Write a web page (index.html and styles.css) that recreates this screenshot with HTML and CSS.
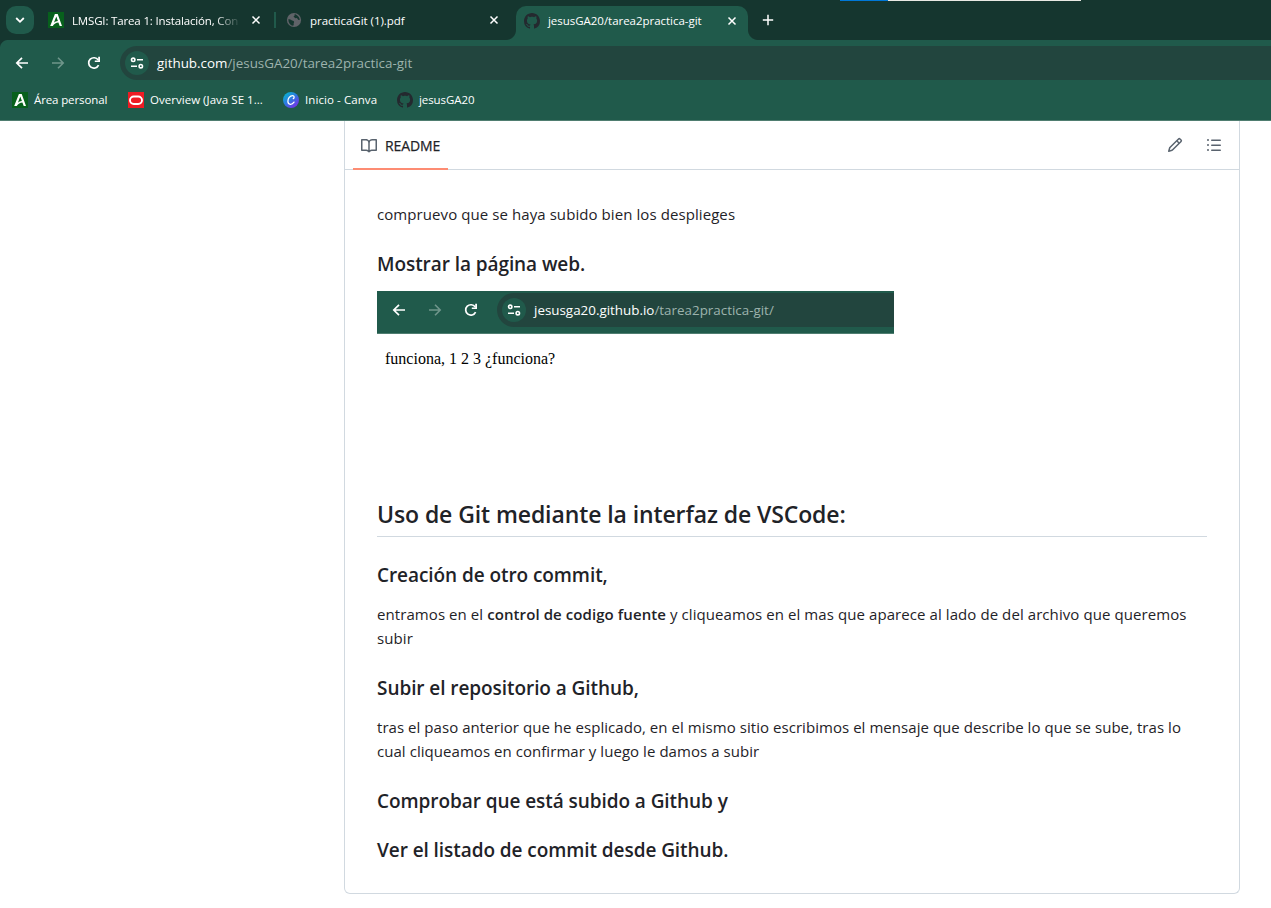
FILE: index.html
```html
<!DOCTYPE html>
<html lang="es">
<head>
<meta charset="utf-8">
<title>jesusGA20/tarea2practica-git</title>
<link rel="stylesheet" href="styles.css">
</head>
<body>
<svg class="defs" aria-hidden="true">
  <symbol id="back" viewBox="0 0 16 16"><path d="M14 8H3M8 2.8 2.8 8 8 13.2" fill="none" stroke="currentColor" stroke-width="1.7"/></symbol>
  <symbol id="forward" viewBox="0 0 16 16"><path d="M2 8h11M8 2.8 13.2 8 8 13.2" fill="none" stroke="currentColor" stroke-width="1.6"/></symbol>
  <symbol id="reload" viewBox="0 0 16 16"><path d="M12.600 10.200A5.200 5.200 0 1 1 12.200 5" fill="none" stroke="currentColor" stroke-width="1.700"/><path d="M14 1.800V7H8.800V5.400h3.400V1.800z" fill="currentColor"/></symbol>
  <symbol id="tune" viewBox="0 0 16 16"><g fill="none" stroke="currentColor" stroke-width="1.6"><circle cx="4.2" cy="4.8" r="1.7"/><path d="M8 4.800h6M2 11.200h6"/><circle cx="11.8" cy="11.2" r="1.7"/></g></symbol>
  <symbol id="close" viewBox="0 0 10 10"><path d="m1.5 1.5 7 7m0-7-7 7" stroke="currentColor" stroke-width="1.5"/></symbol>
  <symbol id="junta" viewBox="0 0 16 16"><path fill="#07601c" d="M0 0h16v16H0z"/><path fill="#fff" d="M6.900 2h2.800L14 14h-2.300l-1.300-3.500c-2.400.1-4.200 1.300-5.600 3.500H2.200zM8.300 4.400 5.900 10.700c1.100-1 2.500-1.600 4-1.700z"/></symbol>
  <symbol id="github" viewBox="0 0 16 16"><path fill="#24292f" d="M8 0c4.420 0 8 3.580 8 8a8.013 8.013 0 0 1-5.450 7.590c-.4.080-.55-.17-.55-.38 0-.27.010-1.130.010-2.200 0-.75-.25-1.230-.54-1.480 1.780-.2 3.650-.88 3.650-3.950 0-.88-.31-1.590-.82-2.150.08-.2.360-1.020-.08-2.120 0 0-.67-.22-2.200.82-.64-.18-1.320-.27-2-.27-.68 0-1.360.09-2 .27-1.530-1.030-2.200-.82-2.200-.82-.44 1.100-.16 1.920-.08 2.120-.51.560-.82 1.280-.82 2.150 0 3.060 1.860 3.750 3.640 3.950-.23.200-.44.550-.51 1.070-.46.210-1.610.550-2.330-.66-.15-.24-.6-.83-1.230-.82-.67.010-.27.380.010.530.340.190.730.900.820 1.130.160.450.680 1.310 2.690.940 0 .67.010 1.300.010 1.490 0 .21-.15.450-.55.380A7.995 7.995 0 0 1 0 8c0-4.420 3.580-8 8-8Z"/></symbol>
</svg>

<header class="browser">
  <div class="tabstrip">
    <span class="tab-search"><svg viewBox="0 0 10 10"><path d="m1.200 3 3.800 3.800L8.800 3" fill="none" stroke="#fff" stroke-width="1.800"/></svg></span>
    <div class="tab tab-one">
      <svg class="favicon"><use href="#junta"/></svg>
      <span class="tab-title fade">LMSGI: Tarea 1: Instalación, Con</span>
      <svg class="close"><use href="#close"/></svg>
    </div>
    <div class="tab tab-two">
      <svg class="favicon" viewBox="0 0 16 16"><circle cx="8" cy="8" r="7.100" fill="#5f6368"/><path d="M8.500 2.200C10 2 13.800 4.600 13.700 8c-.8.300-1.800-.2-2.200-1.200-.4-.9-1.600-.4-2.500-.8-1-.5-.7-1.200-1.500-1.400.3-.9 1.900-.9 1-2.400zM2.300 7.200c1.600 0 2.500.2 3.300 1 .7.700 1.900.3 2.400 1.200.5 1-.6 1.500-.3 2.600.2.700-.2 1.300-.7 1.800-2.600-.5-4.700-2.700-4.700-6.600z" fill="#15362f"/></svg>
      <span class="tab-title">practicaGit (1).pdf</span>
      <svg class="close"><use href="#close"/></svg>
    </div>
    <div class="tab tab-active">
      <svg class="favicon"><use href="#github"/></svg>
      <span class="tab-title">jesusGA20/tarea2practica-git</span>
      <svg class="close"><use href="#close"/></svg>
    </div>
    <svg class="new-tab" viewBox="0 0 12 12"><path d="M6 .8v10.400M.8 6h10.400" stroke="#fff" stroke-width="1.500"/></svg>
    <div class="edge"></div>
  </div>
  <div class="toolbar">
    <div class="nav">
      <svg><use href="#back"/></svg><svg class="dim"><use href="#forward"/></svg><svg><use href="#reload"/></svg>
    </div>
    <div class="address"><span class="site"><svg><use href="#tune"/></svg></span><span class="url">github.com<i>/jesusGA20/tarea2practica-git</i></span></div>
  </div>
  <nav class="bookmarks">
    <a class="b1"><svg><use href="#junta"/></svg><span>Área personal</span></a>
    <a class="b2"><svg viewBox="0 0 16 16"><path fill="#ed1c24" d="M0 0h16v16H0z"/><rect x="2" y="4.500" width="12" height="7.500" rx="3.750" fill="none" stroke="#fff" stroke-width="1.900"/></svg><span>Overview (Java SE 1...</span></a>
    <a class="b3"><svg viewBox="0 0 16 16"><defs><linearGradient id="canva" x1="0" y1="0" x2=".8" y2="1"><stop offset="0" stop-color="#00c4cc"/><stop offset=".5" stop-color="#2b7be0"/><stop offset="1" stop-color="#7d2ae8"/></linearGradient></defs><circle cx="8" cy="8" r="8" fill="url(#canva)"/><path d="M10.300 6.600c1.200-.8 1.200-3-.7-3C7 3.600 4.700 6.500 4.900 9.500c.2 3.500 4 3.700 6.100.6" fill="none" stroke="#fff" stroke-width="1.300" stroke-linecap="round"/></svg><span>Inicio - Canva</span></a>
    <a class="b4"><svg><use href="#github"/></svg><span>jesusGA20</span></a>
  </nav>
</header>

<main class="readme">
  <div class="readme-head">
    <div class="readme-tab">
      <svg viewBox="0 0 16 16"><path d="M0 1.750A.75.750 0 0 1 .750 1h4.253c1.227 0 2.317.590 3 1.501A3.743 3.743 0 0 1 11.006 1h4.245a.75.750 0 0 1 .750.750v10.500a.75.750 0 0 1-.750.750h-4.507a2.250 2.250 0 0 0-1.591.659l-.622.621a.75.750 0 0 1-1.060 0l-.622-.621A2.250 2.250 0 0 0 5.258 13H.750a.75.750 0 0 1-.750-.750Zm7.251 10.324.004-5.073-.002-2.253A2.250 2.250 0 0 0 5.003 2.500H1.500v9h3.757a3.750 3.750 0 0 1 1.994.574ZM8.755 4.750l-.004 7.322a3.752 3.752 0 0 1 1.992-.572H14.500v-9h-3.495a2.250 2.250 0 0 0-2.250 2.250Z"/></svg>
      <span>README</span>
    </div>
    <div class="actions">
      <svg viewBox="0 0 16 16"><path d="M11.013 1.427a1.750 1.750 0 0 1 2.474 0l1.086 1.086a1.750 1.750 0 0 1 0 2.474l-8.610 8.610c-.210.210-.470.364-.756.445l-3.251.930a.75.750 0 0 1-.927-.928l.929-3.250c.081-.286.235-.547.445-.758l8.610-8.610Zm.176 4.823L9.750 4.810l-6.286 6.287a.253.253 0 0 0-.064.108l-.558 1.953 1.953-.558a.253.253 0 0 0 .108-.064Zm1.238-3.763a.25.250 0 0 0-.354 0L10.811 3.750l1.439 1.440 1.263-1.263a.25.250 0 0 0 0-.354Z"/></svg>
      <svg viewBox="0 0 16 16"><path d="M5.750 2.500h8.500a.75.750 0 0 1 0 1.500h-8.500a.75.750 0 0 1 0-1.500Zm0 5h8.500a.75.750 0 0 1 0 1.500h-8.500a.75.750 0 0 1 0-1.500Zm0 5h8.500a.75.750 0 0 1 0 1.500h-8.500a.75.750 0 0 1 0-1.500ZM2 14a1 1 0 1 1 0-2 1 1 0 0 1 0 2Zm1-6a1 1 0 1 1-2 0 1 1 0 0 1 2 0ZM2 4a1 1 0 1 1 0-2 1 1 0 0 1 0 2Z"/></svg>
    </div>
  </div>
  <article class="markdown">
    <p>compruevo que se haya subido bien los desplieges</p>
    <h3>Mostrar la página web.</h3>
    <div class="capture">
      <div class="capture-bar">
        <div class="nav"><svg><use href="#back"/></svg><svg class="dim"><use href="#forward"/></svg><svg><use href="#reload"/></svg></div>
        <div class="address"><span class="site"><svg><use href="#tune"/></svg></span><span class="url">jesusga20.github.io<i>/tarea2practica-git/</i></span></div>
      </div>
      <div class="capture-page">funciona, 1 2 3 ¿funciona?</div>
    </div>
    <h2>Uso de Git mediante la interfaz de VSCode:</h2>
    <h3>Creación de otro commit,</h3>
    <p>entramos en el <b>control de codigo fuente</b> y cliqueamos en el mas que aparece al lado de del archivo que queremos<br>subir</p>
    <h3>Subir el repositorio a Github,</h3>
    <p class="tight">tras el paso anterior que he esplicado, en el mismo sitio escribimos el mensaje que describe lo que se sube, tras lo<br>cual cliqueamos en confirmar y luego le damos a subir</p>
    <h3>Comprobar que está subido a Github y</h3>
    <h3>Ver el listado de commit desde Github.</h3>
  </article>
</main>
</body>
</html>
```
FILE: styles.css
```css
* { box-sizing: border-box; }
body { margin: 0; height: 908px; overflow: hidden; background: #fff; color: #1f2328; font-family: "Open Sans", "Noto Sans", sans-serif; }
svg { display: block; flex: none; }
.defs { display: none; }
i { font-style: normal; }

.browser { height: 121px; background: #205a4b; color: #fff; border-bottom: 1px solid #4f7d70; }
.tabstrip { position: relative; display: flex; align-items: center; height: 40px; padding-left: 6px; background: #15362f; }
.tab-search { display: grid; place-items: center; width: 28px; height: 28px; border-radius: 10px; background: #205a4b; }
.tab-search svg { width: 10px; height: 10px; }
.tab { display: flex; align-items: center; height: 40px; font-size: 11.5px; white-space: nowrap; }
.tab .favicon { width: 16px; height: 16px; margin-right: 8px; }
.tab .close { width: 10px; height: 10px; margin-left: auto; }
.tab-title { line-height: 16px; padding-top: 1px; letter-spacing: -.03px; }
.tab-one { width: 242px; padding-left: 14px; padding-right: 15px; position: relative; }
.tab-one::after { content: ""; position: absolute; right: 0; top: 12px; width: 2px; height: 16px; background: #205a4b; }
.tab-two { width: 240px; padding-left: 10px; padding-right: 17px; }
.tab-active { position: relative; align-self: flex-end; width: 232px; height: 34px; padding: 0 11px 5px 8px; border-radius: 10px 10px 0 0; background: #205a4b; }
.tab-active::before, .tab-active::after { content: ""; position: absolute; bottom: 0; width: 10px; height: 10px; }
.tab-active::before { left: -10px; background: radial-gradient(circle at 0 0, #15362f 9.500px, #205a4b 10.500px); }
.tab-active::after { right: -10px; background: radial-gradient(circle at 100% 0, #15362f 9.500px, #205a4b 10.500px); }
.fade { width: 169px; letter-spacing: -.16px; -webkit-mask-image: linear-gradient(90deg, #000 143px, transparent 169px); }
.new-tab { width: 12px; height: 12px; margin-left: 14px; }
.edge { position: absolute; left: 840px; top: 0; width: 241px; height: 1px; background: linear-gradient(90deg, #0078d7 48px, #e9e9e4 48px); }

.toolbar { display: flex; align-items: center; height: 46px; background: radial-gradient(circle at 8px 8px, #205a4b 7.500px, #15362f 8.500px) 0 0 / 8px 8px no-repeat #205a4b; }
.nav { display: flex; gap: 20px; padding-left: 14px; width: 120px; flex: none; color: #fff; }
.nav svg { width: 16px; height: 16px; }
.nav .dim { color: #6f968b; }
.address { display: flex; align-items: center; flex: 1; height: 34px; padding-left: 5px; border-radius: 17px 0 0 17px; background: #22453e; }
.site { display: grid; place-items: center; width: 24px; height: 24px; margin-right: 8px; border-radius: 50%; background: #205a4b; color: #fff; }
.site svg { width: 16px; height: 16px; }
.url { font-size: 13.4px; line-height: 20px; white-space: nowrap; color: #fff; }
.url i { color: #9db3ad; }
.bookmarks { display: flex; height: 28px; align-items: center; padding-left: 12px; font-size: 11.5px; line-height: 16px; white-space: nowrap; }
.bookmarks a { display: flex; gap: 6px; align-items: center; }
.bookmarks svg { width: 16px; height: 16px; }
.b1 { width: 116px; letter-spacing: -.12px; }
.b2 { width: 155px; letter-spacing: .03px; }
.b3 { width: 114px; letter-spacing: .08px; }
.b4 { letter-spacing: -.08px; }

.readme { width: 896px; height: 773px; margin-left: 344px; border: 1px solid #d1d9e0; border-top: 0; border-radius: 0 0 6px 6px; }
.readme-head { display: flex; justify-content: space-between; height: 49px; padding: 0 17px 0 8px; border-bottom: 1px solid #d1d9e0; }
.readme-tab { display: flex; align-items: center; gap: 8px; width: 95px; height: 49px; padding-left: 8px; border-bottom: 2px solid #fd8c73; font-size: 14px; line-height: 21px; letter-spacing: -.1px; -webkit-text-stroke: .25px; }
.readme-tab span { padding-top: 2px; }
.readme-head svg { width: 16px; height: 16px; fill: #59636e; }
.readme-head .readme-tab svg { margin-top: 3px; }
.actions { display: flex; align-items: center; gap: 23px; }
.markdown { padding: 32px; font-size: 15px; line-height: 24px; letter-spacing: .08px; white-space: nowrap; }
.markdown p { margin: 0 0 16px; }
.markdown .tight { letter-spacing: .05px; }
b { font-weight: 600; }
h2, h3 { font-weight: 600; line-height: 25px; margin: 24px 0 16px; }
h3 { font-size: 19px; height: 25px; padding-top: 2px; letter-spacing: -.07px; }
h2 { font-size: 23px; line-height: 30px; height: 38px; letter-spacing: -.1px; border-bottom: 1px solid #d1d9e0; }
.capture { height: 184px; letter-spacing: 0; }
.capture-bar { display: flex; width: 517px; height: 43px; padding: 2px 0 6px; background: #205a4b; border-bottom: 1px solid #4f7d70; }
.capture-bar .nav { align-items: center; }
.capture-page { padding: 16px 8px; font: 16px/18px "Liberation Serif", serif; color: #000; }
```
